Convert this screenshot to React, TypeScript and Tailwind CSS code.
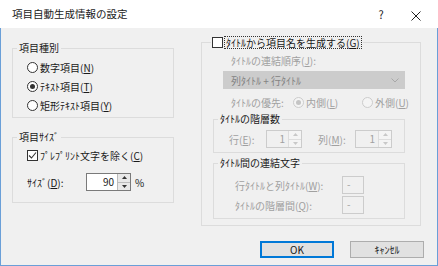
import React from "react";

const font = "font-['Noto_Sans_CJK_JP','Noto_Sans',sans-serif]";

function Radio({ checked, disabled, children }: { checked?: boolean; disabled?: boolean; children: React.ReactNode }) {
  return (
    <div className="flex items-center h-[19px]">
      <span
        className={`w-[11px] h-[11px] rounded-full border flex items-center justify-center ${
          disabled ? "border-[#cccccc] bg-[#f4f4f4]" : "border-[#333333] bg-white"
        }`}
      >
        {checked && <span className={`w-[5px] h-[5px] rounded-full ${disabled ? "bg-[#c4c4c4]" : "bg-[#333333]"}`} />}
      </span>
      <span className="ml-[2px]">{children}</span>
    </div>
  );
}

function Check({ checked }: { checked?: boolean }) {
  return (
    <span className="w-[11px] h-[11px] border border-[#333333] bg-white flex items-center justify-center shrink-0">
      {checked && (
        <svg width="9" height="9" viewBox="0 0 9 9">
          <path d="M1 4.5 L3.5 7 L8 1.5" fill="none" stroke="#333" strokeWidth="1.1" />
        </svg>
      )}
    </span>
  );
}

function Arrows({ disabled }: { disabled?: boolean }) {
  const c = disabled ? "#c8c8c8" : "#333";
  return (
    <div className={`w-[13px] h-full flex flex-col border-l ${disabled ? "border-[#dddddd]" : "border-[#bbbbbb]"}`}>
      <div className={`flex-1 flex items-center justify-center border-b ${disabled ? "border-[#dddddd] bg-[#f4f4f4]" : "border-[#bbbbbb] bg-[#e8e8e8]"}`}>
        <svg width="5" height="3" viewBox="0 0 5 3"><path d="M0 3 L2.5 0 L5 3Z" fill={c} /></svg>
      </div>
      <div className={`flex-1 flex items-center justify-center ${disabled ? "bg-[#f4f4f4]" : "bg-[#e8e8e8]"}`}>
        <svg width="5" height="3" viewBox="0 0 5 3"><path d="M0 0 L2.5 3 L5 0Z" fill={c} /></svg>
      </div>
    </div>
  );
}

function Spin({ value, width, disabled }: { value: string; width: string; disabled?: boolean }) {
  return (
    <div
      className={`${width} h-[18px] flex border ${
        disabled ? "border-[#cccccc] bg-[#f0f0f0] text-[#a0a0a0]" : "border-[#7a7a7a] bg-white text-[#1a1a1a]"
      }`}
    >
      <div className="flex-1 text-right pr-[3px] leading-[16px]">{value}</div>
      <Arrows disabled={disabled} />
    </div>
  );
}

export default function App() {
  return (
    <div className={`w-[438px] h-[266px] flex flex-col text-[10px] text-[#1a1a1a] ${font}`}>
      {/* title bar */}
      <div className="h-[28px] bg-white flex items-center shrink-0">
        <div className="pl-[12px] flex-1 text-[10.5px]">項目自動生成情報の設定</div>
        <div className="w-[20px] text-center text-[11px] mr-[15px]">?</div>
        <div className="w-[20px] text-center mr-[12px]">
          <svg width="10" height="10" viewBox="0 0 10 10" className="inline-block">
            <path d="M0.5 0.5 L9.5 9.5 M9.5 0.5 L0.5 9.5" stroke="#222" strokeWidth="1" />
          </svg>
        </div>
      </div>

      <div className="flex-1 bg-[#f0f0f0] border-x border-b border-[#6a9fd8] flex flex-col">
        <div className="flex items-start">
          {/* left column */}
          <div className="ml-[11px] w-[162px] flex flex-col">
            <fieldset className="mt-[13px] border border-[#dcdcdc] p-0">
              <legend className="ml-[4px] px-[2px] leading-[14px]">項目種別</legend>
              <div className="pt-[3px] pb-[2px] pl-[14px]">
                <Radio>数字項目(<u>N</u>)</Radio>
                <Radio checked>ﾃｷｽﾄ項目(<u>T</u>)</Radio>
                <Radio>矩形ﾃｷｽﾄ項目(<u>Y</u>)</Radio>
              </div>
            </fieldset>

            <fieldset className="mt-[12px] border border-[#dcdcdc] p-0">
              <legend className="ml-[4px] px-[2px] leading-[14px]">項目ｻｲｽﾞ</legend>
              <div className="pt-[2px] pb-[11px] pl-[14px]">
                <div className="flex items-center h-[18px]">
                  <Check checked />
                  <span className="ml-[2px]">ﾌﾟﾚﾌﾟﾘﾝﾄ文字を除く(<u>C</u>)</span>
                </div>
                <div className="flex items-center h-[18px] mt-[9px]">
                  <span className="w-[59px]">ｻｲｽﾞ(<u>D</u>):</span>
                  <Spin value="90" width="w-[45px]" />
                  <span className="ml-[4px]">%</span>
                </div>
              </div>
            </fieldset>
          </div>

          {/* right column */}
          <fieldset className="ml-[27px] mt-[7px] w-[220px] border border-[#dcdcdc] px-0 pt-0 pb-[6px]">
            <legend className="ml-[9px] px-[1px] flex items-center h-[14px]">
              <Check />
              <span className="ml-[1px] px-[1px] border border-dotted border-[#333333] leading-[11px]">
                ﾀｲﾄﾙから項目名を生成する(<u>G</u>)
              </span>
            </legend>

            <div className="text-[#a0a0a0]">
              <div className="pl-[29px] mt-[5px] leading-[14px]">ﾀｲﾄﾙの連結順序(<u>J</u>):</div>
              <div className="ml-[21px] mt-[3px] w-[182px] h-[18px] bg-[#cccccc] border border-[#cccccc] flex items-center pl-[7px] pr-[5px] text-[#838383]">
                <span className="flex-1">列ﾀｲﾄﾙ + 行ﾀｲﾄﾙ</span>
                <svg width="8" height="5" viewBox="0 0 8 5">
                  <path d="M0.5 0.5 L4 4 L7.5 0.5" fill="none" stroke="#a8a8a8" strokeWidth="1" />
                </svg>
              </div>
              <div className="pl-[29px] mt-[5px] flex items-center h-[16px]">
                <span className="w-[62px]">ﾀｲﾄﾙの優先:</span>
                <div className="w-[69px]">
                  <Radio checked disabled>内側(<u>L</u>)</Radio>
                </div>
                <Radio disabled>外側(<u>U</u>)</Radio>
              </div>
            </div>

            <fieldset className="ml-[11px] mt-[2px] w-[192px] border border-[#dcdcdc] p-0">
              <legend className="ml-[4px] px-[2px] leading-[14px]">ﾀｲﾄﾙの階層数</legend>
              <div className="flex items-center h-[18px] text-[#a0a0a0] mt-[4px] mb-[4px] pl-[15px]">
                <span className="w-[37px]">行(<u>E</u>):</span>
                <Spin value="1" width="w-[36px]" disabled />
                <span className="ml-[16px] w-[37px]">列(<u>M</u>):</span>
                <Spin value="1" width="w-[37px]" disabled />
              </div>
            </fieldset>

            <fieldset className="ml-[11px] mt-[3px] w-[192px] border border-[#dcdcdc] p-0">
              <legend className="ml-[4px] px-[2px] leading-[14px]">ﾀｲﾄﾙ間の連結文字</legend>
              <div className="flex flex-col gap-[2px] text-[#a0a0a0] pt-[6px] pb-[4px] pl-[21px]">
                <div className="flex items-center h-[18px]">
                  <span className="w-[107px]">行ﾀｲﾄﾙと列ﾀｲﾄﾙ(<u>W</u>):</span>
                  <div className="w-[22px] h-[18px] border border-[#cccccc] bg-[#f0f0f0] pl-[4px] leading-[14px]">-</div>
                </div>
                <div className="flex items-center h-[18px]">
                  <span className="w-[107px]">ﾀｲﾄﾙの階層間(<u>Q</u>):</span>
                  <div className="w-[22px] h-[18px] border border-[#cccccc] bg-[#f0f0f0] pl-[4px] leading-[14px]">-</div>
                </div>
              </div>
            </fieldset>
          </fieldset>
        </div>

        {/* buttons */}
        <div className="flex justify-end gap-[16px] mt-[15px] mr-[13px]">
          <button className="w-[74px] h-[17px] bg-[#e1e1e1] border border-[#0078d7] outline outline-1 outline-[#0078d7] -outline-offset-2 leading-[14px]">
            OK
          </button>
          <button className="w-[74px] h-[17px] bg-[#e1e1e1] border border-[#adadad] leading-[14px]">ｷｬﾝｾﾙ</button>
        </div>
      </div>
    </div>
  );
}
